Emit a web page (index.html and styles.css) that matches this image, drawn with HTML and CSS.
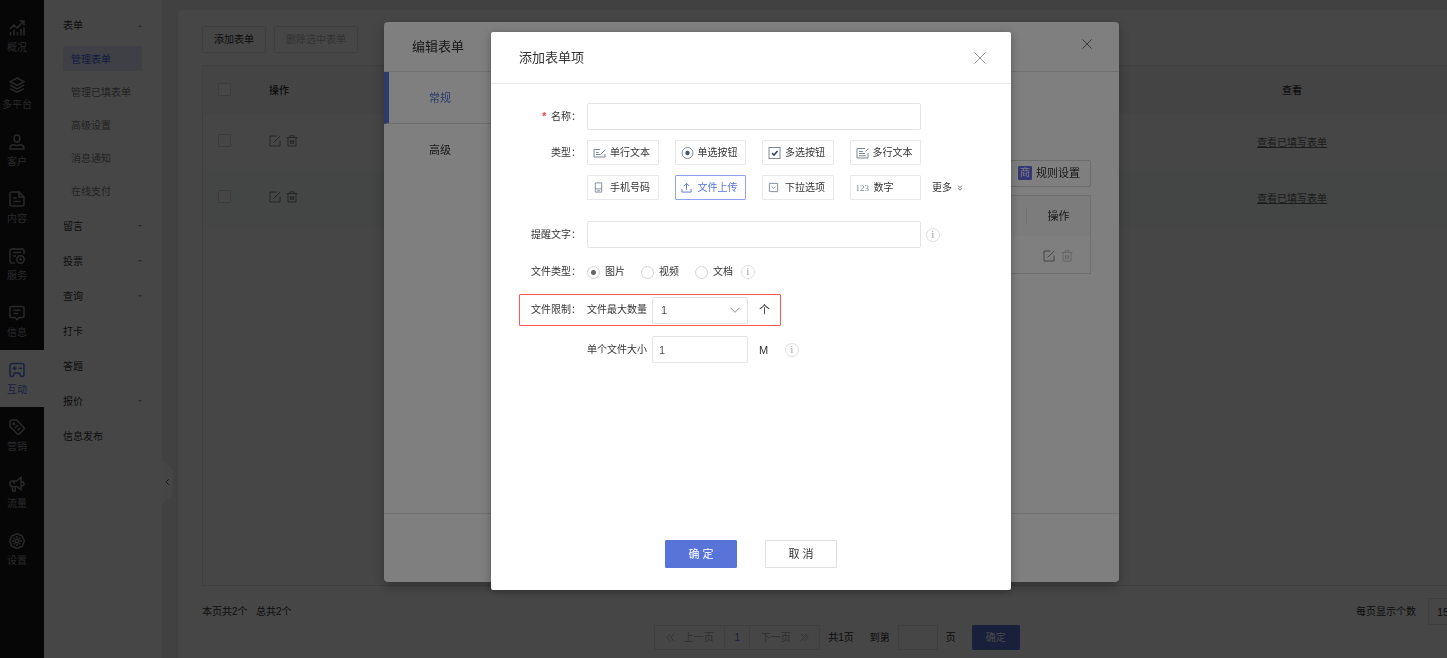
FILE: index.html
```html
<!DOCTYPE html>
<html lang="zh-CN">
<head>
<meta charset="utf-8">
<title>管理表单</title>
<link rel="stylesheet" href="styles.css">
</head>
<body>
<svg class="defs" aria-hidden="true">
  <symbol id="i-stat" viewBox="0 0 16 16"><path d="M1 9l4-4 3 3 6.500-6.500M10.500 1h4.500v4.500M1.500 12v3.500M5 10v5.500M8.500 12v3.500M12 9v6.500M15 7.500v8"/></symbol>
  <symbol id="i-layers" viewBox="0 0 16 16"><path d="M8 1l7 3.700-7 3.700-7-3.700zM1 8.200l7 3.600 7-3.600M1 11.600l7 3.600 7-3.600"/></symbol>
  <symbol id="i-user" viewBox="0 0 16 16"><rect x="5.200" y="1" width="5.600" height="7" rx="2.800"/><path d="M1 15c0-3 1.500-4.300 3.500-4.300 1.500 0 2 .8 3.500.8s2-.8 3.500-.8c2 0 3.500 1.300 3.500 4.300z"/></symbol>
  <symbol id="i-doc" viewBox="0 0 16 16"><path d="M10 1H3a2 2 0 0 0-2 2v10a2 2 0 0 0 2 2h10a2 2 0 0 0 2-2V6zM10 1v5h5M4.500 7h3M4.500 10.500h7"/></symbol>
  <symbol id="i-service" viewBox="0 0 16 16"><path d="M15 6V3a2 2 0 0 0-2-2H3a2 2 0 0 0-2 2v10a2 2 0 0 0 2 2h3M4 4.500h8M4 8h3"/><circle cx="11.500" cy="11.500" r="3.700"/><path d="M11.300 9.700v2h1.700"/></symbol>
  <symbol id="i-msg" viewBox="0 0 16 16"><path d="M2.500 1.500h11A1.500 1.500 0 0 1 15 3v8a1.500 1.500 0 0 1-1.500 1.500H10L8 14.700 6 12.500H2.500A1.500 1.500 0 0 1 1 11V3a1.500 1.500 0 0 1 1.500-1.500zM4.500 5.300h7M4.500 8.500h4.500"/></symbol>
  <symbol id="i-game" viewBox="0 0 16 16"><path d="M3 1.500h10a2 2 0 0 1 2 2v9.500c0 2-3 2-3.500.5L10.500 11h-5L4.500 13.500C4 15 1 15 1 13V3.500a2 2 0 0 1 2-2zM3.500 6.200h4M5.500 4.200v4M9.500 6.200h3.500"/></symbol>
  <symbol id="i-tag" viewBox="0 0 16 16"><path d="M1 3v4.500l7 7a2 2 0 0 0 2.800 0l3.700-3.700a2 2 0 0 0 0-2.800l-7-7H3a2 2 0 0 0-2 2z"/><circle cx="4.800" cy="4.800" r=".8"/><path d="M6 9l3-3M8.500 11.500l3-3"/></symbol>
  <symbol id="i-horn" viewBox="0 0 16 16"><path d="M12 1.500v12L7.500 10.500H3a2 2 0 0 1-2-2V7a2 2 0 0 1 2-2h4.500zM12 5.500c4 0 4 4.500 0 4.500M3 10.500l.7 4.500h2.500v-4.500M5 5v3"/></symbol>
  <symbol id="i-gear" viewBox="0 0 16 16"><path d="M5.500 2.200a3 3 0 0 1 5 0 3 3 0 0 1 3.500 3.500 3 3 0 0 1 0 4.800 3 3 0 0 1-3.500 3.500 3 3 0 0 1-5 0A3 3 0 0 1 2 10.500a3 3 0 0 1 0-4.800 3 3 0 0 1 3.500-3.500z"/><circle cx="8" cy="8" r="1.800"/><path d="M8 3v2M8 11v2M3 8h2M11 8h2M4.600 4.600l1.300 1.300M10.100 10.100l1.300 1.300M4.600 11.400l1.300-1.300M10.100 5.900l1.300-1.300"/></symbol>
  <symbol id="i-edit" viewBox="0 0 12 12"><path d="M7.500 1H1v10h10V5.500M4.500 7.500L11.300 1"/></symbol>
  <symbol id="i-trash" viewBox="0 0 12 12"><path d="M.5 2.500h11M4 2.500V.7h4v1.800M2 2.500v8.500h8V2.500M4.500 5v4M6 5v4M7.500 5v4"/></symbol>
  <symbol id="i-close" viewBox="0 0 12 12"><path d="M.5.5l11 11M11.500.5l-11 11"/></symbol>
  <symbol id="i-line" viewBox="0 0 13 12"><path d="M7 2.500H1v7.500h11M3 5.500h2.500M3 7.500h4.500M8 7l4.500-4.500M12 10V7"/></symbol>
  <symbol id="i-multi" viewBox="0 0 13 12"><path d="M9 1.500H1v9.500h11V6M3 4.500h4M3 6.500h6M3 8.800h7M9.500 4.500l3-3"/></symbol>
  <symbol id="i-radio" viewBox="0 0 12 12"><circle cx="6" cy="6" r="5.500"/><circle cx="6" cy="6" r="2.200" fill="#46566b" stroke="none"/></symbol>
  <symbol id="i-check" viewBox="0 0 12 12"><rect x=".5" y=".5" width="11" height="11"/><path d="M3.500 6l2 2 3.500-4" stroke="#35465c" stroke-width="1.600"/></symbol>
  <symbol id="i-phone" viewBox="0 0 12 12"><path d="M2.500 1h7v10h-7zM2.500 7.500h7M4.500 9.500h3"/></symbol>
  <symbol id="i-upload" viewBox="0 0 12 12"><path d="M1 7.500V11h10V7.500M6 8.500V1.500M3 4.500l3-3 3 3"/></symbol>
  <symbol id="i-drop" viewBox="0 0 12 12"><path d="M1.500 1.500h9v9h-9zM4 5l2 2 2-2"/></symbol>
  <symbol id="i-down" viewBox="0 0 10 10"><path d="M.5 2.800L5 7.300l4.500-4.500"/></symbol>
  <symbol id="i-ddown" viewBox="0 0 6 6"><path d="M.8.6L3 2.600 5.200.6M.8 3.200L3 5.200l2.200-2"/></symbol>
  <symbol id="i-dleft" viewBox="0 0 10 10"><path d="M5 1L1 5l4 4M9 1L5 5l4 4"/></symbol>
  <symbol id="i-dright" viewBox="0 0 10 10"><path d="M1 1l4 4-4 4M5 1l4 4-4 4"/></symbol>
</svg>

<div class="app">
  <nav class="rail">
    <a class="rail-item" href="#"><svg><use href="#i-stat"/></svg>概况</a>
    <a class="rail-item" href="#"><svg><use href="#i-layers"/></svg>多平台</a>
    <a class="rail-item" href="#"><svg><use href="#i-user"/></svg>客户</a>
    <a class="rail-item" href="#"><svg><use href="#i-doc"/></svg>内容</a>
    <a class="rail-item" href="#"><svg><use href="#i-service"/></svg>服务</a>
    <a class="rail-item" href="#"><svg><use href="#i-msg"/></svg>信息</a>
    <a class="rail-item active" href="#"><svg><use href="#i-game"/></svg>互动</a>
    <a class="rail-item" href="#"><svg><use href="#i-tag"/></svg>营销</a>
    <a class="rail-item" href="#"><svg><use href="#i-horn"/></svg>流量</a>
    <a class="rail-item" href="#"><svg><use href="#i-gear"/></svg>设置</a>
  </nav>

  <aside class="menu">
    <a class="menu-head open" href="#">表单</a>
    <div class="menu-sub">
      <a class="active" href="#">管理表单</a>
      <a href="#">管理已填表单</a>
      <a href="#">高级设置</a>
      <a href="#">消息通知</a>
      <a href="#">在线支付</a>
    </div>
    <a class="menu-head closed" href="#">留言</a>
    <a class="menu-head closed" href="#">投票</a>
    <a class="menu-head closed" href="#">查询</a>
    <a class="menu-head" href="#">打卡</a>
    <a class="menu-head" href="#">答题</a>
    <a class="menu-head closed" href="#">报价</a>
    <a class="menu-head" href="#">信息发布</a>
    <button class="fold" type="button" aria-label="收起菜单"><svg viewBox="0 0 11 44"><path class="fold-bg" d="M0 0l11 10v24L0 44z"/><path class="fold-arrow" d="M7 19l-3 3 3 3"/></svg></button>
  </aside>

  <main class="content">
    <div class="toolbar">
      <button class="btn" type="button">添加表单</button>
      <button class="btn" type="button" disabled>删除选中表单</button>
    </div>
    <div class="list">
      <table class="list-table">
        <thead>
          <tr><th class="c-check"><input type="checkbox" aria-label="全选"></th><th class="c-ops">操作</th><th class="c-view">查看</th></tr>
        </thead>
        <tbody>
          <tr><td><input type="checkbox" aria-label="选择第1行"></td><td><span class="ops"><button type="button" aria-label="编辑"><svg><use href="#i-edit"/></svg></button><button type="button" aria-label="删除"><svg><use href="#i-trash"/></svg></button></span></td><td class="c-view"><a href="#">查看已填写表单</a></td></tr>
          <tr><td><input type="checkbox" aria-label="选择第2行"></td><td><span class="ops"><button type="button" aria-label="编辑"><svg><use href="#i-edit"/></svg></button><button type="button" aria-label="删除"><svg><use href="#i-trash"/></svg></button></span></td><td class="c-view"><a href="#">查看已填写表单</a></td></tr>
        </tbody>
      </table>
    </div>
    <div class="summary">
      <span>本页共2个&nbsp;&nbsp; 总共2个</span>
      <label class="page-size">每页显示个数<select><option>15</option></select></label>
    </div>
    <div class="pager">
      <div class="pages">
        <button type="button" disabled><svg><use href="#i-dleft"/></svg>上一页</button>
        <button class="current" type="button">1</button>
        <button type="button" disabled>下一页<svg><use href="#i-dright"/></svg></button>
      </div>
      <span class="total">共1页</span>
      <label class="goto">到第<input type="text">页</label>
      <button class="btn primary go" type="button">确定</button>
    </div>
  </main>
</div>

<div class="mask mask-back">
  <section class="editor" role="dialog" aria-label="编辑表单">
    <header class="editor-head"><h2>编辑表单</h2><button class="close" type="button" aria-label="关闭"><svg><use href="#i-close"/></svg></button></header>
    <div class="editor-body">
      <div class="tabs">
        <button class="active" type="button">常规</button>
        <button type="button">高级</button>
      </div>
      <div class="editor-main">
        <button class="rule" type="button"><span class="badge">商</span>规则设置</button>
        <table class="fields">
          <thead><tr><th></th><th class="f-ops"><span>操作</span></th></tr></thead>
          <tbody><tr><td></td><td class="f-ops"><span class="ops"><button type="button" aria-label="编辑"><svg><use href="#i-edit"/></svg></button><button type="button" aria-label="删除" disabled><svg><use href="#i-trash"/></svg></button></span></td></tr></tbody>
        </table>
      </div>
    </div>
    <footer class="editor-foot"></footer>
  </section>
</div>

<div class="mask mask-front">
  <section class="dialog" role="dialog" aria-label="添加表单项">
    <header class="dialog-head"><h2>添加表单项</h2><button class="close" type="button" aria-label="关闭"><svg><use href="#i-close"/></svg></button></header>
    <form class="form">
      <div class="row">
        <label class="label" for="name"><b>*</b> 名称：</label>
        <input class="text wide" id="name" type="text">
      </div>
      <div class="row types-row">
        <span class="label">类型：</span>
        <div class="types">
          <button type="button"><svg><use href="#i-line"/></svg>单行文本</button>
          <button type="button"><svg><use href="#i-radio"/></svg>单选按钮</button>
          <button type="button"><svg><use href="#i-check"/></svg>多选按钮</button>
          <button type="button"><svg><use href="#i-multi"/></svg>多行文本</button>
          <button type="button"><svg class="small"><use href="#i-phone"/></svg>手机号码</button>
          <button class="active" type="button"><svg class="small"><use href="#i-upload"/></svg>文件上传</button>
          <button type="button"><svg class="small"><use href="#i-drop"/></svg>下拉选项</button>
          <button type="button"><i>123</i>数字</button>
        </div>
        <button class="more" type="button">更多<svg><use href="#i-ddown"/></svg></button>
      </div>
      <div class="row tip-row">
        <label class="label" for="tip">提醒文字：</label>
        <input class="text wide" id="tip" type="text">
        <span class="info">i</span>
      </div>
      <div class="row kind-row">
        <span class="label">文件类型：</span>
        <div class="radios">
          <label><input type="radio" name="kind" checked>图片</label>
          <label><input type="radio" name="kind">视频</label>
          <label><input type="radio" name="kind">文档</label>
        </div>
        <span class="info">i</span>
      </div>
      <div class="row limit-row">
        <span class="label">文件限制：</span>
        <label class="measure" for="count">文件最大数量</label>
        <span class="select"><select class="text" id="count"><option>1</option></select><svg><use href="#i-down"/></svg></span>
        <span class="unit">个</span>
      </div>
      <div class="row size-row">
        <span class="label"></span>
        <label class="measure" for="size">单个文件大小</label>
        <input class="text short" id="size" type="text" value="1">
        <span class="unit">M</span>
        <span class="info">i</span>
      </div>
    </form>
    <footer class="dialog-foot">
      <button class="btn primary" type="button">确 定</button>
      <button class="btn" type="button">取 消</button>
    </footer>
  </section>
</div>
</body>
</html>
```

FILE: styles.css
```css
* { box-sizing: border-box; }

html, body { height: 100%; margin: 0; }

body {
  overflow: hidden;
  font: 10px/16px "Liberation Sans", "Noto Sans CJK SC", sans-serif;
  color: #333;
  background: #ededed;
}

button, input, select { font: inherit; color: inherit; margin: 0; }
button { padding: 0; background: none; border: 0; }
a { color: inherit; text-decoration: none; }
h2 { margin: 0; font-size: 13px; line-height: 20px; font-weight: 400; }
svg { fill: none; stroke: currentColor; stroke-width: 1; flex: none; display: block; }
.defs { position: absolute; width: 0; height: 0; }

.app { display: flex; height: 100vh; }

/* icon rail */
.rail { flex: none; width: 44px; padding-top: 8px; background: #17171b; }
.rail-item {
  display: flex; flex-direction: column; align-items: center; justify-content: center; gap: 3px;
  height: 57px; padding: 1px 10px 0 0; color: #95959a; white-space: nowrap;
}
.rail-item svg { width: 18px; height: 18px; padding: 1px; overflow: visible; stroke-width: 1.5; }
.rail-item.active { background: #fff; color: #5874e8; }

/* section menu */
.menu { position: relative; flex: none; width: 118px; padding: 8px 20px 0 19px; background: #fff; }
.menu-head { display: flex; align-items: center; justify-content: space-between; height: 35px; }
.menu-head.open::after, .menu-head.closed::after { content: ""; border: 2px solid transparent; }
.menu-head.open::after { border-bottom-color: #999; margin-bottom: 2px; }
.menu-head.closed::after { border-top-color: #999; }
.menu-sub { display: grid; gap: 8px; padding: 3px 0 6px; }
.menu-sub a { height: 25px; padding: 1px 0 0 8px; line-height: 25px; color: #7b7b7b; border-radius: 2px; }
.menu-sub a.active { background: #e3e8fa; color: #4464e8; }
.fold { position: absolute; left: 100%; top: 460px; width: 11px; height: 44px; }
.fold-bg { fill: #fafafa; stroke: none; }
.fold-arrow { stroke: #666; }

/* list page */
.content {
  flex: 1; min-width: 0; display: flex; flex-direction: column;
  margin: 10px -25px 0 16px; padding: 16px 0 8px 24px; background: #fff; border-top-left-radius: 4px;
}
.btn { height: 27px; padding: 0 10px; border: 1px solid #e0e0e0; border-radius: 1px; background: #fff; }
.btn:disabled { color: #b8b8b8; }
.btn.primary { background: #5874d8; border-color: #5874d8; color: #fff; }
.toolbar { display: flex; gap: 8px; }
.toolbar .btn { padding: 1px 11px 0; }
.list { flex: 1; margin-top: 12px; border: 1px solid #e6e6e6; }
.list-table { width: 100%; border-collapse: collapse; table-layout: fixed; }
.list-table th { height: 48px; font-weight: 500; text-align: left; background: #f6f7f9; }
.list-table td { height: 56px; }
.list-table th, .list-table td { padding: 0; }
.list-table .c-ops, .list-table .c-view { padding-top: 2px; }
.list-table tbody tr:nth-child(2) { background: #f8f9fa; }
.list-table .c-check { width: 66px; padding-bottom: 2px; }
.list-table td:first-child { padding-bottom: 4px; }
.list-table td .ops { padding-bottom: 2px; }
.list-table .c-view { width: 358px; text-align: center; }
.list-table .c-view a { color: #666; text-decoration: underline; }
.list-table input {
  appearance: none; display: block; width: 13px; height: 13px; margin-left: 15px;
  border: 1px solid #d8d8d8; border-radius: 1px; background: #fff;
}
.ops { display: flex; gap: 5px; color: #888; }
.ops svg { width: 12px; height: 12px; }
.ops button:disabled { color: #ccc; }
.summary { display: flex; justify-content: space-between; align-items: center; height: 39px; padding-top: 12px; }
.page-size { display: flex; align-items: center; gap: 12px; }
.page-size select { appearance: none; width: 44px; height: 27px; padding: 0 8px; border: 1px solid #e6e6e6; background: #fff; font-size: 11px; }
.pager { display: flex; justify-content: center; align-items: center; }
.pages { display: flex; border: 1px solid #e6e6e6; }
.pages button { display: flex; align-items: center; justify-content: center; gap: 9px; width: 69px; height: 23px; color: #a8a8a8; }
.pages .current { width: 26px; border: solid #e6e6e6; border-width: 0 1px; color: #5874d8; }
.pages svg { width: 9px; height: 9px; }
.total { margin: 0 16px 0 8px; }
.goto { display: flex; align-items: center; gap: 8px; }
.goto input { width: 40px; height: 25px; border: 1px solid #e6e6e6; background: #fff; }
.btn.go { width: 48px; height: 25px; margin-left: 16px; }

.mask { position: fixed; inset: 0; display: flex; justify-content: center; align-items: flex-start; padding-left: 56px; }
.mask-back { padding-top: 22px; background: rgba(0, 0, 0, .45); }
.mask-front { padding: 32px 0 0 55px; background: rgba(0, 0, 0, .5); }

.close { color: #999; }
.close svg { width: 12px; height: 12px; }

/* form editor */
.editor { display: flex; flex-direction: column; width: 735px; height: 560px; background: #fff; border-radius: 4px; box-shadow: 0 4px 12px rgba(0, 0, 0, .3); }
.editor-head { display: flex; justify-content: space-between; height: 50px; padding: 15px 27px 0 28px; border-bottom: 1px solid #e2e2e2; }
.editor-head .close { align-self: flex-start; color: #555; }
.editor-head .close svg { width: 10px; height: 14px; }
.editor-body { flex: 1; display: flex; }
.tabs { width: 120px; font-size: 11px; }
.tabs button { display: block; width: 100%; height: 52px; padding-left: 45px; text-align: left; }
.tabs .active { padding-left: 40px; color: #5874d8; border-left: 5px solid #5874d8; border-bottom: 1px solid #dcdcdc; }
.editor-main { flex: 1; display: flex; flex-direction: column; padding: 88px 28px 0 20px; }
.rule { display: flex; align-items: center; gap: 4px; align-self: flex-end; height: 27px; padding: 0 10px 2px; border: 1px solid #d8d8d8; border-radius: 2px; font-size: 11px; }
.badge { width: 14px; height: 14px; border-radius: 1px; background: #6b6fe8; color: #fff; font-size: 10px; line-height: 14px; text-align: center; }
.fields { width: 100%; margin-top: 8px; border: 1px solid #dedede; border-spacing: 0; }
.fields th { height: 40px; padding: 0; background: #f8f8f8; font-weight: 400; font-size: 11px; }
.fields td { height: 37px; padding: 2px 0 0; }
.fields .f-ops { width: 64px; }
.f-ops > span { display: flex; justify-content: center; }
th.f-ops > span { border-left: 1px solid #e2e2e2; }
td.f-ops > span { gap: 6px; }

.editor-foot { height: 69px; border-top: 1px solid #e2e2e2; }

/* form item dialog */
.dialog { display: flex; flex-direction: column; width: 520px; height: 558px; background: #fff; border-radius: 2px; box-shadow: 0 2px 10px rgba(0, 0, 0, .3); }
.dialog-head { display: flex; align-items: center; justify-content: space-between; height: 52px; padding: 0 25px 0 28px; border-bottom: 1px solid #e8e8e8; }
.form { flex: 1; padding: 19px 28px 0; }
.row { display: flex; align-items: center; }
.label { flex: none; width: 62px; margin-right: 6px; text-align: right; }
.label b { margin-right: 2px; color: #f33; }
.text { height: 27px; padding: 0 6px; border: 1px solid #e2e4e8; border-radius: 2px; background: #fff; font-size: 11px; color: #555; }
.wide { width: 334px; }
.types-row { align-items: flex-start; margin-top: 10px; }
.types-row .label { line-height: 25px; }
.types { display: grid; grid-template-columns: repeat(4, 1fr); gap: 10px 16px; width: 334px; }
.types button { display: flex; align-items: center; gap: 4px; height: 25px; padding: 0 0 0 5px; border: 1px solid #e6e8ec; border-radius: 1px; white-space: nowrap; }
.types svg { width: 13px; height: 12px; color: #7d8896; }
.types .small { width: 11px; height: 11px; margin-right: 2px; }
.types i { width: 13px; margin-right: 1px; font: 9px/16px "Liberation Serif", serif; color: #7d8896; }
.types .active { color: #5874d8; border-color: #8fa2ee; }
.types .active svg { color: inherit; }
.more { display: flex; align-items: center; gap: 5px; align-self: flex-end; height: 25px; margin-left: 11px; }
.more svg { width: 6px; height: 6px; color: #888; }
.tip-row { margin-top: 21px; }
.info { width: 14px; height: 14px; margin-left: 5px; border: 1px solid #e0e0e0; border-radius: 50%; font: 10px/12px "Liberation Serif", serif; color: #999; text-align: center; }
.kind-row { height: 20px; margin-top: 14px; }
.radios { display: flex; gap: 16px; }
.radios label { display: flex; align-items: center; gap: 5px; }
.radios input { appearance: none; width: 13px; height: 13px; border: 1px solid #d4d4d4; border-radius: 50%; background: #fff; }
.radios input:checked { background: radial-gradient(circle, #666 2px, #fff 3px); }
.kind-row .info { margin-left: 8px; }
.limit-row { width: 262px; height: 32px; margin-top: 12px; border: 1px solid #f55; border-radius: 1px; }
.limit-row .label { width: 61px; }
.measure { width: 65px; white-space: nowrap; }
.select { position: relative; display: flex; align-items: center; width: 96px; }
.select select { appearance: none; width: 100%; padding-left: 8px; }
.select svg { position: absolute; right: 8px; width: 10px; height: 10px; color: #888; pointer-events: none; }
.short { width: 96px; }
.unit { width: 12px; margin-left: 11px; font-size: 11px; }
.size-row { margin-top: 10px; }
.size-row .info { margin-left: 14px; }
.dialog-foot { display: flex; justify-content: center; gap: 28px; padding-bottom: 22px; }
.dialog-foot .btn { width: 72px; height: 28px; font-size: 11px; }
```
